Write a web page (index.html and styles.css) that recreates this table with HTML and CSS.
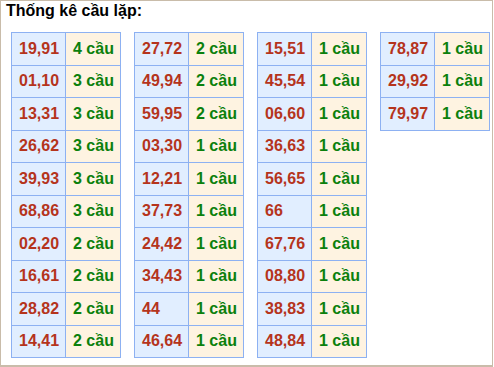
FILE: index.html
```html
<!DOCTYPE html>
<html lang="vi">
<head>
<meta charset="utf-8">
<title>Thống kê cầu lặp</title>
<link rel="stylesheet" href="styles.css">
</head>
<body>
<div class="box">
  <div class="title">Thống kê cầu lặp:</div>
  <div class="tables">
    <table class="stat">
      <tr><td class="num">19,91</td><td class="cnt">4 cầu</td></tr>
      <tr><td class="num">01,10</td><td class="cnt">3 cầu</td></tr>
      <tr><td class="num">13,31</td><td class="cnt">3 cầu</td></tr>
      <tr><td class="num">26,62</td><td class="cnt">3 cầu</td></tr>
      <tr><td class="num">39,93</td><td class="cnt">3 cầu</td></tr>
      <tr><td class="num">68,86</td><td class="cnt">3 cầu</td></tr>
      <tr><td class="num">02,20</td><td class="cnt">2 cầu</td></tr>
      <tr><td class="num">16,61</td><td class="cnt">2 cầu</td></tr>
      <tr><td class="num">28,82</td><td class="cnt">2 cầu</td></tr>
      <tr><td class="num">14,41</td><td class="cnt">2 cầu</td></tr>
    </table>
    <table class="stat">
      <tr><td class="num">27,72</td><td class="cnt">2 cầu</td></tr>
      <tr><td class="num">49,94</td><td class="cnt">2 cầu</td></tr>
      <tr><td class="num">59,95</td><td class="cnt">2 cầu</td></tr>
      <tr><td class="num">03,30</td><td class="cnt">1 cầu</td></tr>
      <tr><td class="num">12,21</td><td class="cnt">1 cầu</td></tr>
      <tr><td class="num">37,73</td><td class="cnt">1 cầu</td></tr>
      <tr><td class="num">24,42</td><td class="cnt">1 cầu</td></tr>
      <tr><td class="num">34,43</td><td class="cnt">1 cầu</td></tr>
      <tr><td class="num">44</td><td class="cnt">1 cầu</td></tr>
      <tr><td class="num">46,64</td><td class="cnt">1 cầu</td></tr>
    </table>
    <table class="stat">
      <tr><td class="num">15,51</td><td class="cnt">1 cầu</td></tr>
      <tr><td class="num">45,54</td><td class="cnt">1 cầu</td></tr>
      <tr><td class="num">06,60</td><td class="cnt">1 cầu</td></tr>
      <tr><td class="num">36,63</td><td class="cnt">1 cầu</td></tr>
      <tr><td class="num">56,65</td><td class="cnt">1 cầu</td></tr>
      <tr><td class="num">66</td><td class="cnt">1 cầu</td></tr>
      <tr><td class="num">67,76</td><td class="cnt">1 cầu</td></tr>
      <tr><td class="num">08,80</td><td class="cnt">1 cầu</td></tr>
      <tr><td class="num">38,83</td><td class="cnt">1 cầu</td></tr>
      <tr><td class="num">48,84</td><td class="cnt">1 cầu</td></tr>
    </table>
    <table class="stat">
      <tr><td class="num">78,87</td><td class="cnt">1 cầu</td></tr>
      <tr><td class="num">29,92</td><td class="cnt">1 cầu</td></tr>
      <tr><td class="num">79,97</td><td class="cnt">1 cầu</td></tr>
    </table>
  </div>
</div>
</body>
</html>
```

FILE: styles.css
```css
html, body {
  margin: 0;
  padding: 0;
  background: #ffffff;
}

.box {
  box-sizing: border-box;
  width: 493px;
  height: 367px;
  border: 1px solid #c9bcaa;
  border-bottom-width: 2px;
  font-family: "Liberation Sans", Arial, sans-serif;
  padding: 1px 0 0 10px;
}

.title {
  font-size: 16px;
  font-weight: bold;
  line-height: 18px;
  color: #000000;
  margin-left: -5px;
}

.tables {
  display: flex;
  align-items: flex-start;
  gap: 13px;
  margin-top: 12px;
}

.stat {
  border-collapse: collapse;
  table-layout: fixed;
  width: 110px;
  font-size: 16px;
  font-weight: bold;
}

.stat tr {
  height: 32.5px;
}

.stat td {
  border: 1px solid #8db1f2;
  padding: 0 0 0 7px;
  text-align: left;
  vertical-align: middle;
  white-space: nowrap;
}

.stat .num {
  width: 54px;
  box-sizing: border-box;
  background: #e1eeff;
  color: #b5341c;
}

.stat .cnt {
  background: #fef3e1;
  color: #0b800d;
}
```
